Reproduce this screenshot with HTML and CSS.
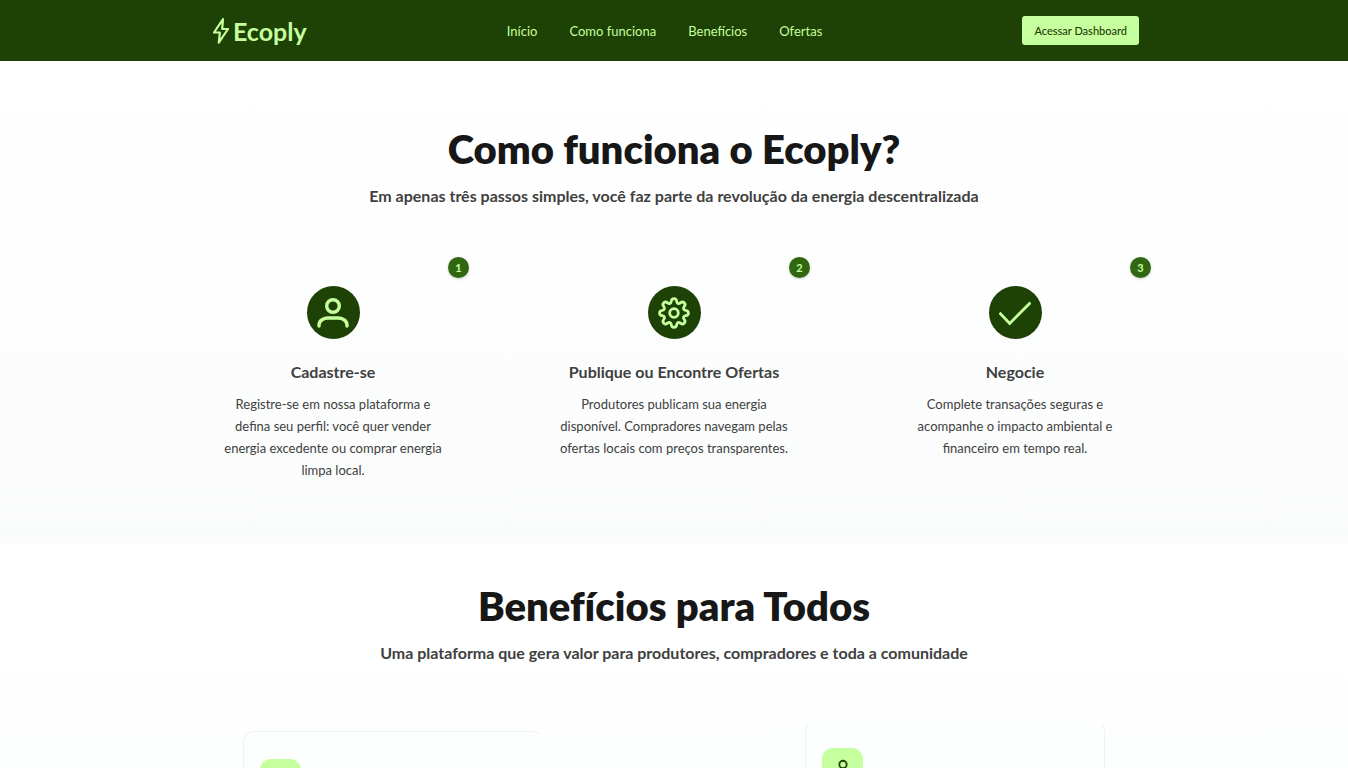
FILE: index.html
```html
<!DOCTYPE html>
<html lang="pt-BR">
<head>
<meta charset="utf-8">
<meta name="viewport" content="width=device-width, initial-scale=1">
<title>Ecoply</title>
<link rel="stylesheet" href="styles.css">
</head>
<body>
<header class="header">
  <div class="container header-inner">
    <a class="logo" href="#">
      <svg class="logo-icon" viewBox="0 0 16 26" fill="none" stroke="currentColor" stroke-width="2.2" stroke-linejoin="round" aria-hidden="true"><path d="M10 1.2 1 14.5H6.9L5.8 24.6 15 11H9.2Z"/></svg>
      <span>Ecoply</span>
    </a>
    <nav class="nav">
      <a href="#inicio">Início</a>
      <a href="#como-funciona">Como funciona</a>
      <a href="#beneficios">Benefícios</a>
      <a href="#ofertas">Ofertas</a>
    </nav>
    <button class="dashboard" type="button">Acessar Dashboard</button>
  </div>
</header>
<main>
  <section class="steps" id="como-funciona">
    <h2 class="title">Como funciona o Ecoply?</h2>
    <p class="subtitle">Em apenas três passos simples, você faz parte da revolução da energia descentralizada</p>
    <div class="container step-list">
      <article class="step">
        <span class="badge">1</span>
        <div class="step-icon">
          <svg viewBox="0 0 32 32" fill="none" stroke="currentColor" stroke-width="3.4" stroke-linecap="round" aria-hidden="true"><circle cx="16" cy="9" r="6.3"/><path d="M2 29v-1c0-4.600 5-7 9-7h10c4 0 9 2.400 9 7v1"/></svg>
        </div>
        <h3>Cadastre-se</h3>
        <p>Registre-se em nossa plataforma e defina seu perfil: você quer vender energia excedente ou comprar energia limpa local.</p>
      </article>
      <article class="step">
        <span class="badge">2</span>
        <div class="step-icon">
          <svg viewBox="0 0 32 32" fill="none" stroke="currentColor" stroke-width="2.800" stroke-linejoin="round" aria-hidden="true"><circle cx="16" cy="16" r="4.300"/><path d="M13.300 4.300C13.700.7 18.300.7 18.700 4.300C19 6.500 20.700 7.200 22.400 5.800C25.200 3.500 28.500 6.800 26.200 9.600C24.800 11.300 25.500 13 27.700 13.300C31.300 13.700 31.300 18.300 27.700 18.700C25.500 19 24.800 20.700 26.200 22.400C28.500 25.200 25.200 28.500 22.400 26.200C20.700 24.800 19 25.500 18.700 27.700C18.300 31.300 13.700 31.300 13.300 27.700C13 25.500 11.300 24.800 9.600 26.200C6.800 28.500 3.500 25.200 5.800 22.400C7.200 20.700 6.500 19 4.300 18.700C.7 18.300.7 13.700 4.300 13.300C6.500 13 7.200 11.300 5.800 9.600C3.500 6.800 6.800 3.500 9.600 5.800C11.300 7.200 13 6.500 13.300 4.300Z"/></svg>
        </div>
        <h3>Publique ou Encontre Ofertas</h3>
        <p>Produtores publicam sua energia disponível. Compradores navegam pelas ofertas locais com preços transparentes.</p>
      </article>
      <article class="step">
        <span class="badge">3</span>
        <div class="step-icon">
          <svg viewBox="0 0 32 32" fill="none" stroke="currentColor" stroke-width="2.800" aria-hidden="true"><path d="M0.500 15.700 10.700 26.400 31.500 5.500"/></svg>
        </div>
        <h3>Negocie</h3>
        <p>Complete transações seguras e acompanhe o impacto ambiental e financeiro em tempo real.</p>
      </article>
    </div>
  </section>
  <section class="benefits" id="beneficios">
    <h2 class="title">Benefícios para Todos</h2>
    <p class="subtitle">Uma plataforma que gera valor para produtores, compradores e toda a comunidade</p>
    <div class="benefit-list">
      <article class="benefit benefit-lower">
        <div class="benefit-icon"></div>
      </article>
      <article class="benefit benefit-upper">
        <div class="benefit-icon">
          <svg viewBox="0 0 24 24" fill="none" stroke="currentColor" stroke-width="2" stroke-linecap="round" aria-hidden="true"><circle cx="12" cy="7" r="4"/><path d="M4 22c0-5 3-8 8-8s8 3 8 8"/></svg>
        </div>
      </article>
    </div>
  </section>
</main>
</body>
</html>
```
FILE: styles.css
```css
* {
  box-sizing: border-box;
}

html {
  overflow: hidden;
}

body {
  margin: 0;
  height: 100vh;
  overflow: hidden;
  background: #fff;
  color: #404040;
  font-family: Lato, "Liberation Sans", sans-serif;
  font-size: 13px;
}

h2, h3, p {
  margin: 0;
}

.container {
  width: calc(100% - 32px);
  max-width: 932px;
  margin: 0 auto;
}

.header {
  background: #1e4105;
  color: #c6ff9d;
}

.header-inner {
  display: flex;
  justify-content: space-between;
  align-items: center;
  min-height: 61px;
  padding: 0 1px 0 5px;
}

.logo {
  display: flex;
  align-items: center;
  gap: 4px;
  color: inherit;
  font-size: 25px;
  font-weight: 700;
  line-height: 32px;
  text-decoration: none;
}

.logo-icon {
  width: 16px;
  height: 26px;
}

.nav {
  display: flex;
  gap: 32px;
}

.nav a {
  color: inherit;
  line-height: 20px;
  text-decoration: none;
}

.dashboard {
  padding: 6px 12px;
  border: 0;
  border-radius: 3px;
  background: #c6ff9d;
  color: #1e4105;
  font: 500 11px/17px Lato, sans-serif;
}

.title {
  color: #171717;
  font-size: 40px;
  font-variant-ligatures: none;
  font-weight: 800;
  line-height: 48px;
  text-align: center;
}

.subtitle {
  margin-top: 11px;
  font-size: 16px;
  font-weight: 700;
  line-height: 24px;
  text-align: center;
}

.steps {
  padding: 64px 0 62px;
  background: linear-gradient(#fff, #fafcfb);
}

.step-list {
  display: flex;
  justify-content: space-between;
  margin-top: 60px;
}

.step {
  position: relative;
  width: 250px;
  padding: 18px 10px 0;
  text-align: center;
}

.badge {
  position: absolute;
  top: -11px;
  right: -11px;
  width: 21px;
  height: 21px;
  border-radius: 50%;
  background: #326711;
  box-shadow: 0 1px 3px rgb(0 0 0 / 20%);
  color: #c6ff9d;
  font-size: 11px;
  font-weight: 700;
  line-height: 21px;
}

.step-icon {
  display: grid;
  place-items: center;
  width: 53px;
  height: 53px;
  margin: 0 auto;
  border-radius: 50%;
  background: #1e4105;
  color: #c6ff9d;
}

.step-icon svg {
  width: 32px;
  height: 32px;
}

.step h3 {
  margin-top: 21px;
  font-size: 16px;
  font-weight: 700;
  line-height: 24px;
}

.step p {
  margin-top: 9px;
  line-height: 22px;
}

.benefits {
  padding: 39px 0 64px;
  background: linear-gradient(#fff, #fafffc);
}

.benefit-list {
  display: flex;
  justify-content: space-between;
  align-items: flex-start;
  width: calc(100% - 32px);
  max-width: 862px;
  margin: 55px auto 0;
}

.benefit {
  width: 300px;
  min-height: 240px;
  padding: 27px 16px;
  border: 1px solid #f2f4f3;
  border-radius: 11px;
  background: #fdfffe;
}

.benefit-lower {
  margin-top: 11px;
  border-right-color: transparent;
}

.benefit-upper {
  border-top-color: transparent;
}

.benefit-icon {
  display: grid;
  place-items: center;
  width: 41px;
  height: 41px;
  border-radius: 11px;
  background: #c6ff9d;
  color: #1e4105;
}

.benefit-icon svg {
  width: 22px;
  height: 22px;
}
```
